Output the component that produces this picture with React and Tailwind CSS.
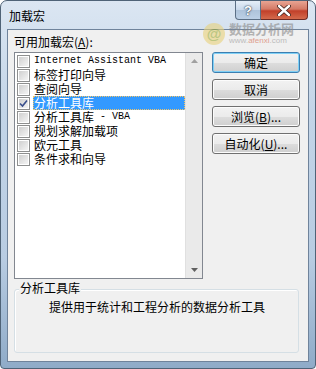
import React from 'react';

const cjk = { fontFamily: '"Noto Sans CJK SC", "Liberation Sans", sans-serif' };
const mono = { fontFamily: '"Liberation Mono", "Noto Sans CJK SC", monospace' };

const items = [
    { label: 'Internet Assistant VBA', latin: true },
    { label: '标签打印向导' },
    { label: '查阅向导' },
    { label: '分析工具库', checked: true, selected: true },
    { label: '分析工具库 - VBA' },
    { label: '规划求解加载项' },
    { label: '欧元工具' },
    { label: '条件求和向导' },
];

const CheckBox = ({ checked }) => (
    <div className="w-[13px] h-[13px] border border-[#8e8f8f] bg-white p-[1px] shrink-0">
        <div className="w-full h-full bg-gradient-to-br from-[#d0d0d0] to-[#f4f4f4] flex items-center justify-center">
            {checked && (
                <svg width="9" height="9" viewBox="0 0 9 9">
                    <path d="M1 4.5 L3.5 7 L8 1.5" fill="none" stroke="#3a4f8c" strokeWidth="1.6" />
                </svg>
            )}
        </div>
    </div>
);

const Btn = ({ children, primary }) => (
    <div
        className={`h-[21px] w-[88px] rounded-[3px] border flex items-center justify-center text-[12px] text-black
        ${primary ? 'border-[#3c7fb1] shadow-[inset_0_0_0_1px_#7fd0f6]' : 'border-[#707070] shadow-[inset_0_0_0_1px_#fcfcfc]'}`}
        style={{ ...cjk, background: 'linear-gradient(#f2f2f2 0%, #ebebeb 50%, #dddddd 51%, #cfcfcf 100%)' }}
    >
        {children}
    </div>
);

export default function App() {
    return (
        <div className="w-[316px] h-[369px] bg-white">
            <div
                className="relative w-[316px] h-[369px] rounded-t-[7px] rounded-b-[4px] border border-[#4f6377] flex flex-col"
                style={{ background: 'linear-gradient(180deg, #dbe6f2 0%, #c3d5e8 30%, #b8cce2 70%, #8fabc8 100%)' }}
            >
                {/* title bar */}
                <div className="h-[28px] flex items-start justify-between pl-[8px] pr-[7px] shrink-0">
                    <span className="mt-[7px] text-[12px] text-black leading-[16px]" style={cjk}>加载宏</span>
                    <div className="flex">
                        <div
                            className="w-[26px] h-[19px] border border-[#5b6f85] border-t-0 rounded-bl-[4px] flex items-center justify-center"
                            style={{ background: 'linear-gradient(#e5eef8 0%, #c8d8ea 50%, #aec3da 51%, #bcd0e6 100%)' }}
                        >
                            <span className="text-[13px] font-bold text-white leading-none" style={{ fontFamily: '"Liberation Sans", sans-serif', textShadow: '0 0 2px #2b3b4f, 0 0 1px #2b3b4f' }}>?</span>
                        </div>
                        <div
                            className="w-[47px] h-[19px] border border-[#6e2b25] border-t-0 border-l-0 rounded-br-[4px] flex items-center justify-center"
                            style={{ background: 'linear-gradient(#e8a493 0%, #d47a66 45%, #c2402a 55%, #d46a4c 100%)' }}
                        >
                            <svg width="14" height="11" viewBox="0 0 14 11">
                                <path d="M2 1 L12 10 M12 1 L2 10" stroke="#3a1f1a" strokeWidth="4" strokeLinecap="round" />
                                <path d="M2 1 L12 10 M12 1 L2 10" stroke="#ffffff" strokeWidth="2.4" strokeLinecap="round" />
                            </svg>
                        </div>
                    </div>
                </div>

                {/* client area */}
                <div className="mx-[6px] mb-[6px] flex-1 border border-[#6f839b] bg-[#f0f0f0] px-[6px] pt-[5px] flex flex-col">
                    <div className="text-[12px] leading-[14px] text-black h-[17px]" style={cjk}>
                        可用加载宏(<span className="underline">A</span>):
                    </div>
                    <div className="flex gap-[9px]">
                        {/* list */}
                        <div className="w-[189px] h-[227px] border border-[#828790] bg-white flex">
                            <div className="flex-1 pt-[1px] pl-[2px]">
                                {items.map((it) => (
                                    <div key={it.label} className="h-[14px] flex items-center gap-[3px]">
                                        <CheckBox checked={it.checked} />
                                        <div
                                            className={`h-[14px] flex items-center pl-[1px] text-[12px] leading-[14px] whitespace-nowrap
                                            ${it.selected ? 'flex-1 bg-[#3399ff] text-white outline-1 outline-dotted outline-[#f3c566] -outline-offset-1' : 'text-black'}`}
                                            style={it.latin ? { ...mono, fontSize: '10px' } : cjk}
                                        >
                                            {it.label.includes(' - VBA') ? (
                                                <>
                                                    分析工具库<span style={{ ...mono, fontSize: '10px' }}>&nbsp;-&nbsp;VBA</span>
                                                </>
                                            ) : it.label}
                                        </div>
                                    </div>
                                ))}
                            </div>
                            {/* scrollbar */}
                            <div className="w-[17px] bg-[#eaeaea] border-l border-[#e0e0e0] flex flex-col justify-between items-center py-[6px]">
                                <svg width="7" height="4" viewBox="0 0 7 4"><path d="M0 4 L3.5 0 L7 4 Z" fill="#a0a0a0" /></svg>
                                <svg width="7" height="4" viewBox="0 0 7 4"><path d="M0 0 L3.5 4 L7 0 Z" fill="#606060" /></svg>
                            </div>
                        </div>
                        {/* buttons */}
                        <div className="flex flex-col gap-[6px]">
                            <Btn primary>确定</Btn>
                            <Btn>取消</Btn>
                            <Btn>浏览(<span className="underline">B</span>)...</Btn>
                            <Btn>自动化(<span className="underline">U</span>)...</Btn>
                        </div>
                    </div>

                    {/* group box */}
                    <div className="relative mt-[10px] w-[285px] h-[64px] border border-[#d5dfe5] rounded-[3px] shadow-[inset_1px_1px_0_#ffffff]">
                        <span className="absolute -top-[9px] left-[4px] bg-[#f0f0f0] px-[1px] text-[12px] leading-[14px] text-black" style={cjk}>分析工具库</span>
                        <div className="pl-[34px] pt-[10px] text-[12px] leading-[14px] text-black" style={cjk}>
                            提供用于统计和工程分析的数据分析工具
                        </div>
                    </div>
                </div>

                {/* watermark */}
                <div className="absolute left-[202px] top-[21px] flex items-center gap-[4px] opacity-60 pointer-events-none">
                    <div className="w-[22px] h-[22px] rounded-full bg-[#e8d27a] flex items-center justify-center">
                        <span className="text-[15px] font-bold text-[#9aab3a] leading-none" style={{ fontFamily: '"Liberation Sans", sans-serif' }}>@</span>
                    </div>
                    <div className="flex flex-col gap-[1px]">
                        <span className="text-[13px] text-[#8a8a8a] font-bold leading-[13px]" style={cjk}>数据分析网</span>
                        <span className="text-[8px] text-[#999] leading-[9px]" style={{ fontFamily: '"Liberation Sans", sans-serif' }}>www.<span className="text-[#d46a4c]">afenxi</span>.com</span>
                    </div>
                </div>
            </div>
        </div>
    );
}
